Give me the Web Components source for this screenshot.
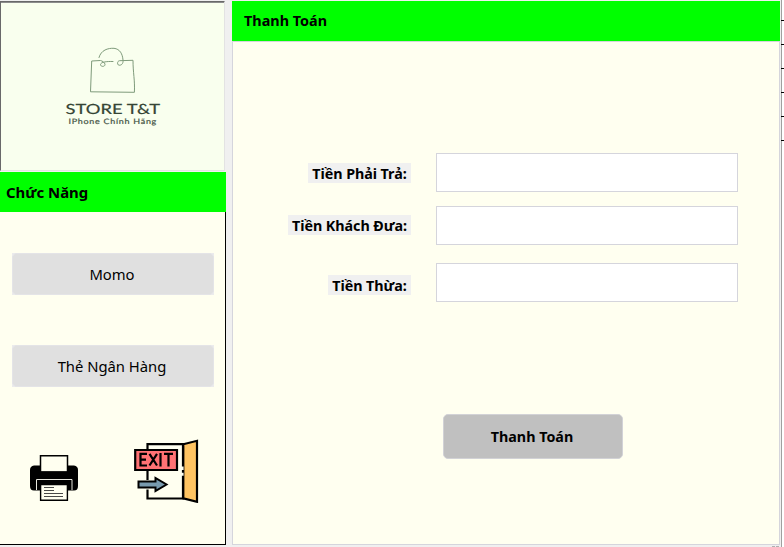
<!DOCTYPE html>
<html lang="vi">
<head>
<meta charset="utf-8">
<title>Thanh Toán</title>
<style>
html,body{margin:0;height:547px;overflow:hidden;background:#f0f0f0;color:#000;font-family:"Noto Sans","Open Sans",sans-serif}
</style>
</head>
<body>
<payment-window></payment-window>
<script>
const define = (name, html) => customElements.define(name, class extends HTMLElement {
  constructor() {
    super();
    const t = document.createElement('template');
    t.innerHTML = html;
    this.attachShadow({mode: 'open'}).append(t.content.cloneNode(true));
  }
});

define('title-bar', `<style>
:host{display:flex;align-items:center;height:40px;box-sizing:border-box;background:#00ff00;padding:0 0 1px var(--inset,12px);font-size:var(--size,14.4px);font-weight:700;white-space:nowrap}
</style><slot></slot>`);

define('store-logo', `<style>
:host{display:block;box-sizing:border-box;width:225px;height:170px;background:#f9ffee;border:1px solid;border-color:#696969 #e3e3e3 #e3e3e3 #696969;box-shadow:inset 0 1px #8c8c8c}
svg{display:block}
</style><svg width="223" height="168" viewBox="1 2 223 168">
<g fill="none" stroke="#7f9b7b" stroke-width="1" stroke-linecap="round">
<path d="M99 57.5C101 50 108 48 114 48.3C120 49 122.500 54 123 60C123.500 64 121 65.500 119 65.200C117 65 117 61 119.500 60.700L133 60.300C133 73 135 80 134.400 92.300L90.500 91.800L91.700 61L100.500 60.500C102 60.800 105 62.500 105 64.500C105 67 100.500 67 100.500 64.500C101 62 106 61.300 113 61.500"/></g>
<g fill="#354535" text-rendering="geometricPrecision">
<text x="65.500" y="114" font-family="Lato" font-size="14" textLength="94.500" lengthAdjust="spacingAndGlyphs" stroke="#354535" stroke-width=".2">STORE T&amp;T</text>
<text x="68.500" y="123.600" font-family="Lato" font-size="7.500" letter-spacing=".6" fill="#465646" stroke="#465646" stroke-width=".2" textLength="88.500" lengthAdjust="spacingAndGlyphs">IPhone Chính Hãng</text></g></svg>`);

define('menu-button', `<style>
:host{display:block;height:42px;background:#ebebec}
button{display:flex;align-items:center;justify-content:center;box-sizing:border-box;width:100%;height:100%;margin:0;padding:0 2px 0 0;border:1px solid #e4e4e7;border-radius:5px;background:#e0e0e0;color:#000;font:14.8px "Noto Sans",sans-serif}
</style><button><slot></slot></button>`);

define('printer-icon', `<style>:host{display:block;width:48px;height:46px}svg{display:block}</style>
<svg width="48" height="46" viewBox="30 455 48 46">
<path d="M34 465.500H74Q78 466 78 470V486Q78 490.500 74 490.500H34Q30 490.500 30 486V470Q30 466 34 465.500Z"/>
<path d="M40.500 472V455.800H67.500V472Z" fill="#fffff0" stroke="#000" stroke-width="1.500"/>
<path d="M36 471.500H72V479H36Z"/>
<path d="M36.500 490V479.500H72V490" fill="none" stroke="#e8e8df"/>
<path d="M40.600 484.500H67.400V500.300H40.600Z" fill="#fffff0" stroke="#000" stroke-width="1.400"/>
<path d="M44 487.500H54M44 490.500H54M44 493.500H63M44 496.500H63" stroke="#333" stroke-width=".9"/></svg>`);

define('exit-icon', `<style>:host{display:block;width:66px;height:64px}svg{display:block}</style>
<svg width="66" height="64" viewBox="133 439 66 64" stroke="#000" stroke-width="2.200">
<path d="M147.500 450V444.200H183V498.500H147.500V489.500M147.500 480V471" fill="none"/>
<path d="M183.300 444.200L197 440.800V501.800L183.300 498.300Z" fill="#ffc462"/>
<path d="M182 466.500V470M182 472.800V475.800" stroke="#fffff0" stroke-width="3.200"/>
<path d="M135.200 450H177V470H135.200Z" fill="#ff7274"/>
<path d="M147 453.800H140.500V465.500H147M140.500 459.700H146M149.500 453.800L157 465.500M157 453.800L149.500 465.500M160.500 453V466.500M164 453.800H173M168.500 454V466.500" fill="none"/>
<path d="M138.500 481.500H155.500V478L166.500 484.500L155.500 491V487.500H138.500Z" fill="#789aae" stroke-width="2"/></svg>`);

define('money-row', `<style>
:host{display:flex;height:39px}
.label{width:178px;display:flex;justify-content:flex-end;align-items:flex-start;padding-top:var(--drop,10px);box-sizing:border-box}
label{display:flex;align-items:center;justify-content:center;box-sizing:border-box;width:var(--w);height:20px;padding:1px 0 0;background:#f0f0f0;font-size:14.3px;font-weight:700;line-height:20px;white-space:nowrap;letter-spacing:var(--ls,-.05px)}
input{box-sizing:border-box;width:302px;height:39px;margin:0 0 0 25px;border:1px solid #d5d5dc;border-radius:0;background:#fff;outline:0}
</style><div class="label"><label><slot></slot></label></div><input>`);

define('submit-button', `<style>
:host{display:block;width:180px;height:45px}
button{width:100%;height:100%;box-sizing:border-box;margin:0;padding:0 2px 0 0;border:1px solid #d2d2d6;border-radius:5px;background:#c0c0c0;color:#000;font:700 14.3px "Noto Sans",sans-serif}
</style><button><slot></slot></button>`);

define('edge-ruler', `<style>
:host{display:flex;width:4px;height:547px;background:linear-gradient(#fff,#fff) 2px 0/2px 100% no-repeat}
i{width:1px}b{width:1px;background:#a0a0a0}
span{flex:1;display:flex;flex-direction:column;gap:23px;padding-top:20px;margin-left:-1px}
u{height:1px;background:#000;flex:none}
</style><i></i><b></b><span><u></u><u></u><u></u><u></u><u></u><u></u></span>`);

define('payment-window', `<style>
:host{display:grid;grid-template-columns:226px 548px 4px;column-gap:6px;width:784px;height:547px;background:linear-gradient(90deg,#b0b0b0 3px,transparent 3px) 772px 546px/4px 1px repeat-x;background-size:4px 1px;background:linear-gradient(#b0b0b0,#b0b0b0) 772px 546px/3px 1px no-repeat,linear-gradient(#b0b0b0,#b0b0b0) 776px 546px/3px 1px no-repeat}
aside,main{display:flex;flex-direction:column;padding-top:1px;box-sizing:border-box;height:545px}
aside title-bar{--inset:6px;--size:14.9px;margin-top:1px;flex:none}
.menu{flex:1;box-sizing:border-box;border:solid #000;border-width:0 1px 1px 0;background:#fffff0;padding:41px 11px 0 12px;display:flex;flex-direction:column}
menu-button+menu-button{margin-top:50px}
.icons{display:flex;margin:52px 0 0 18px;gap:55px}
printer-icon{margin-top:16px}
.form{flex:1;box-sizing:border-box;border:1px solid #d5d5dc;background:#fffff0;padding:111px 0 0;display:flex;flex-direction:column}
submit-button{margin:112px 0 0 210px}
edge-ruler{margin-left:-6px}
</style>
<aside><store-logo></store-logo><title-bar>Chức Năng</title-bar>
<div class="menu"><menu-button>Momo</menu-button><menu-button>Thẻ Ngân Hàng</menu-button>
<div class="icons"><printer-icon></printer-icon><exit-icon></exit-icon></div></div></aside>
<main><title-bar>Thanh Toán</title-bar><div class="form">
<money-row style="--w:103px">Tiền Phải Trả:</money-row>
<money-row style="--w:123px;--drop:9px;margin-top:14px">Tiền Khách Đưa:</money-row>
<money-row style="--w:83px;--drop:12px;margin-top:18px">Tiền Thừa:</money-row>
<submit-button>Thanh Toán</submit-button></div></main>
<edge-ruler></edge-ruler>`);
</script>
</body>
</html>
